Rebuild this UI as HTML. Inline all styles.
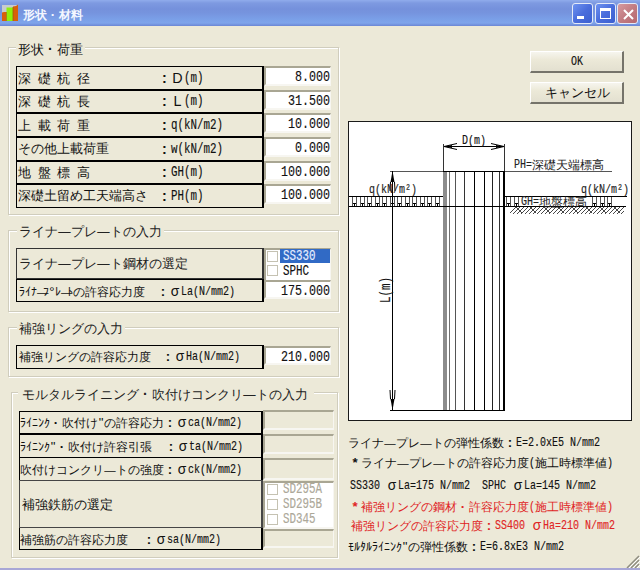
<!DOCTYPE html>
<html><head><meta charset="utf-8"><style>
html,body{margin:0;padding:0;}
body{width:640px;height:570px;overflow:hidden;position:relative;background:#ECE9D8;font-family:"Liberation Sans",sans-serif;font-size:12px;color:#000;}
.a{position:absolute;box-sizing:border-box;}
.t{position:absolute;white-space:nowrap;line-height:20px;height:20px;font-size:0;}
.t span{line-height:20px;vertical-align:baseline;}
.ib{display:inline-block;white-space:nowrap;transform-origin:0 0;}
.f{font-family:"Liberation Sans",sans-serif;-webkit-text-stroke:0.3px currentColor;}
.ns{-webkit-text-stroke:0;}
.h{font-family:"Liberation Mono",monospace;-webkit-text-stroke:0.15px currentColor;}
#title{left:0;top:0;width:640px;height:26px;background:linear-gradient(#90ACEC 0px,#7E9AE1 3px,#7591DC 9px,#7694DE 13px,#7A9FE7 19px,#7EA4EB 23px,#7190DC 25px,#6B86D4 26px);}
.cap{width:21px;height:21px;border:1px solid #E4EAF8;border-radius:3px;}
.lb{border:1px solid #000;border-right-width:2px;}
.inp{border-top:2px solid #A9A693;border-left:2px solid #A9A693;border-bottom:2px solid #F7F6F1;border-right:1px solid #F7F6F1;}
.btn{background:linear-gradient(#F6F5EE,#ECE9D8 40%,#E3E0D0);border-top:1px solid #fff;border-left:1px solid #fff;border-right:2px solid #75736A;border-bottom:2px solid #75736A;}
.cb{width:11px;height:11px;border:1px solid #C5C2B2;background:#fff;}
</style></head><body>
<div class="a" id="title"></div>
<svg class="a" style="left:2px;top:4px" width="17" height="18" viewBox="0 0 17 18"><rect x="0" y="1" width="16" height="16" fill="#C8CBCE"/><polygon points="0,17 0,8.5 2,8 4.5,8 4.5,17" fill="#D8600A"/><polygon points="4.5,17 4.5,3.5 11,3.5 11,17" fill="#8EF00C"/><polygon points="11,17 11,2.5 14,2 16,0.5 16,17" fill="#D8600A"/><line x1="11" y1="3" x2="11" y2="17" stroke="#9A5A10" stroke-width="0.8"/><line x1="4.5" y1="8" x2="4.5" y2="17" stroke="#9A7A10" stroke-width="0.8"/></svg>
<div class="t" style="left:23px;top:5.15px;color:#F4F7FF;font-weight:bold;"><span class="f" style="font-size:16.00px">形状</span><span class="ib f ns" style="width:12.00px;text-align:center;font-size:13.20px;font-weight:bold;">·</span><span class="f" style="font-size:16.00px">材料</span></div>
<div class="a cap" style="left:572px;top:3px;background:linear-gradient(135deg,#6F93F0,#4A6DDC 50%,#3B5FD0)"><div class="a" style="left:4px;top:12px;width:7px;height:3px;background:#fff"></div></div>
<div class="a cap" style="left:595px;top:3px;background:linear-gradient(135deg,#6F93F0,#4A6DDC 50%,#3B5FD0)"><div class="a" style="left:4px;top:4px;width:9px;height:7px;border:1px solid #fff;border-top-width:3px;box-sizing:content-box"></div></div>
<div class="a cap" style="left:617px;top:3px;background:linear-gradient(135deg,#D69A9F,#C27C82 50%,#B5686F)"><svg class="a" style="left:4px;top:4px" width="13" height="13"><path d="M2,2 L11,11 M11,2 L2,11" stroke="#fff" stroke-width="2"/></svg></div>
<div class="a" style="left:0;top:568px;width:640px;height:2px;background:#A8A7D6"></div>
<div class="a" style="left:9px;top:48px;width:331px;height:168px;border:1px solid #fff"></div><div class="a" style="left:8px;top:47px;width:331px;height:168px;border:1px solid #D0CDBD"></div><div class="a" style="left:16px;top:41px;width:69px;height:12px;background:#ECE9D8"></div>
<div class="t" style="left:18px;top:39.05px;color:#111;"><span class="f" style="font-size:17.33px">形状</span><span class="ib f ns" style="width:13.00px;text-align:center;font-size:14.30px;font-weight:bold;">·</span><span class="f" style="font-size:17.33px">荷重</span></div>
<div class="a" style="left:9px;top:231px;width:331px;height:82px;border:1px solid #fff"></div><div class="a" style="left:8px;top:230px;width:331px;height:82px;border:1px solid #D0CDBD"></div><div class="a" style="left:17px;top:224px;width:147px;height:12px;background:#ECE9D8"></div>
<div class="t" style="left:19px;top:221.65px;color:#222;"><span class="f" style="font-size:17.33px">ライナ</span><span class="ib f ns" style="width:13.00px;text-align:center;font-size:12.35px;">—</span><span class="f" style="font-size:17.33px">プレ</span><span class="ib f ns" style="width:13.00px;text-align:center;font-size:12.35px;">—</span><span class="f" style="font-size:17.33px">トの入力</span></div>
<div class="a" style="left:9px;top:328px;width:331px;height:50px;border:1px solid #fff"></div><div class="a" style="left:8px;top:327px;width:331px;height:50px;border:1px solid #D0CDBD"></div><div class="a" style="left:17px;top:321px;width:108px;height:12px;background:#ECE9D8"></div>
<div class="t" style="left:19px;top:318.75px;color:#222;"><span class="f" style="font-size:17.33px">補強リングの入力</span></div>
<div class="a" style="left:12px;top:393px;width:327px;height:166px;border:1px solid #fff"></div><div class="a" style="left:11px;top:392px;width:327px;height:166px;border:1px solid #D0CDBD"></div><div class="a" style="left:18px;top:386px;width:296px;height:12px;background:#ECE9D8"></div>
<div class="t" style="left:22px;top:383.75px;color:#222;"><span class="f" style="font-size:17.33px">モルタルライニング</span><span class="ib f ns" style="width:13.00px;text-align:center;font-size:14.30px;font-weight:bold;">·</span><span class="f" style="font-size:17.33px">吹付けコンクリ</span><span class="ib f ns" style="width:13.00px;text-align:center;font-size:12.35px;">—</span><span class="f" style="font-size:17.33px">トの入力</span></div>
<div class="a lb" style="left:16px;top:66px;width:248px;height:24px;border-color:#000"></div>
<div class="t" style="left:18px;top:67.95px;color:#111;"><span class="f" style="font-size:17.33px">深</span><span class="ib" style="width:6.50px"><span class="h ib" style="font-size:14.04px;transform:scaleX(0.772);vertical-align:1px">&nbsp;</span></span><span class="f" style="font-size:17.33px">礎</span><span class="ib" style="width:6.50px"><span class="h ib" style="font-size:14.04px;transform:scaleX(0.772);vertical-align:1px">&nbsp;</span></span><span class="f" style="font-size:17.33px">杭</span><span class="ib" style="width:6.50px"><span class="h ib" style="font-size:14.04px;transform:scaleX(0.772);vertical-align:1px">&nbsp;</span></span><span class="f" style="font-size:17.33px">径</span></div>
<div class="t" style="left:158px;top:67.95px;color:#111;"><span class="ib f ns" style="width:13.00px;text-align:center;font-size:14.30px;font-weight:bold;">:</span><span class="ib f ns" style="width:13.00px;text-align:center;font-size:14.30px;">D</span><span class="ib" style="width:19.50px"><span class="h ib" style="font-size:14.04px;transform:scaleX(0.772);vertical-align:1px">(m)</span></span></div>
<div class="a inp" style="left:264px;top:66px;width:67px;height:20px;background:#fff"></div><div class="t" style="left:295px;top:67.00px;color:#111;"><span class="ib" style="width:35.00px"><span class="h ib" style="font-size:15.12px;transform:scaleX(0.772);vertical-align:1px">8.000</span></span></div>
<div class="a lb" style="left:16px;top:90px;width:248px;height:23px;border-color:#000"></div>
<div class="t" style="left:18px;top:91.45px;color:#111;"><span class="f" style="font-size:17.33px">深</span><span class="ib" style="width:6.50px"><span class="h ib" style="font-size:14.04px;transform:scaleX(0.772);vertical-align:1px">&nbsp;</span></span><span class="f" style="font-size:17.33px">礎</span><span class="ib" style="width:6.50px"><span class="h ib" style="font-size:14.04px;transform:scaleX(0.772);vertical-align:1px">&nbsp;</span></span><span class="f" style="font-size:17.33px">杭</span><span class="ib" style="width:6.50px"><span class="h ib" style="font-size:14.04px;transform:scaleX(0.772);vertical-align:1px">&nbsp;</span></span><span class="f" style="font-size:17.33px">長</span></div>
<div class="t" style="left:158px;top:91.45px;color:#111;"><span class="ib f ns" style="width:13.00px;text-align:center;font-size:14.30px;font-weight:bold;">:</span><span class="ib f ns" style="width:13.00px;text-align:center;font-size:14.30px;">L</span><span class="ib" style="width:19.50px"><span class="h ib" style="font-size:14.04px;transform:scaleX(0.772);vertical-align:1px">(m)</span></span></div>
<div class="a inp" style="left:264px;top:90px;width:67px;height:20px;background:#fff"></div><div class="t" style="left:288px;top:91.00px;color:#111;"><span class="ib" style="width:42.00px"><span class="h ib" style="font-size:15.12px;transform:scaleX(0.772);vertical-align:1px">31.500</span></span></div>
<div class="a lb" style="left:16px;top:113px;width:248px;height:24px;border-color:#000"></div>
<div class="t" style="left:18px;top:114.95px;color:#111;"><span class="f" style="font-size:17.33px">上</span><span class="ib" style="width:6.50px"><span class="h ib" style="font-size:14.04px;transform:scaleX(0.772);vertical-align:1px">&nbsp;</span></span><span class="f" style="font-size:17.33px">載</span><span class="ib" style="width:6.50px"><span class="h ib" style="font-size:14.04px;transform:scaleX(0.772);vertical-align:1px">&nbsp;</span></span><span class="f" style="font-size:17.33px">荷</span><span class="ib" style="width:6.50px"><span class="h ib" style="font-size:14.04px;transform:scaleX(0.772);vertical-align:1px">&nbsp;</span></span><span class="f" style="font-size:17.33px">重</span></div>
<div class="t" style="left:158px;top:114.95px;color:#111;"><span class="ib f ns" style="width:13.00px;text-align:center;font-size:14.30px;font-weight:bold;">:</span><span class="ib" style="width:52.00px"><span class="h ib" style="font-size:14.04px;transform:scaleX(0.772);vertical-align:1px">q(kN/m2)</span></span></div>
<div class="a inp" style="left:264px;top:113px;width:67px;height:20px;background:#fff"></div><div class="t" style="left:288px;top:114.00px;color:#111;"><span class="ib" style="width:42.00px"><span class="h ib" style="font-size:15.12px;transform:scaleX(0.772);vertical-align:1px">10.000</span></span></div>
<div class="a lb" style="left:16px;top:137px;width:248px;height:24px;border-color:#000"></div>
<div class="t" style="left:18px;top:138.95px;color:#111;"><span class="f" style="font-size:17.33px">その他上載荷重</span></div>
<div class="t" style="left:158px;top:138.95px;color:#111;"><span class="ib f ns" style="width:13.00px;text-align:center;font-size:14.30px;font-weight:bold;">:</span><span class="ib" style="width:52.00px"><span class="h ib" style="font-size:14.04px;transform:scaleX(0.772);vertical-align:1px">w(kN/m2)</span></span></div>
<div class="a inp" style="left:264px;top:137px;width:67px;height:20px;background:#fff"></div><div class="t" style="left:295px;top:138.00px;color:#111;"><span class="ib" style="width:35.00px"><span class="h ib" style="font-size:15.12px;transform:scaleX(0.772);vertical-align:1px">0.000</span></span></div>
<div class="a lb" style="left:16px;top:161px;width:248px;height:23px;border-color:#000"></div>
<div class="t" style="left:18px;top:162.45px;color:#111;"><span class="f" style="font-size:17.33px">地</span><span class="ib" style="width:6.50px"><span class="h ib" style="font-size:14.04px;transform:scaleX(0.772);vertical-align:1px">&nbsp;</span></span><span class="f" style="font-size:17.33px">盤</span><span class="ib" style="width:6.50px"><span class="h ib" style="font-size:14.04px;transform:scaleX(0.772);vertical-align:1px">&nbsp;</span></span><span class="f" style="font-size:17.33px">標</span><span class="ib" style="width:6.50px"><span class="h ib" style="font-size:14.04px;transform:scaleX(0.772);vertical-align:1px">&nbsp;</span></span><span class="f" style="font-size:17.33px">高</span></div>
<div class="t" style="left:158px;top:162.45px;color:#111;"><span class="ib f ns" style="width:13.00px;text-align:center;font-size:14.30px;font-weight:bold;">:</span><span class="ib" style="width:32.50px"><span class="h ib" style="font-size:14.04px;transform:scaleX(0.772);vertical-align:1px">GH(m)</span></span></div>
<div class="a inp" style="left:264px;top:161px;width:67px;height:20px;background:#fff"></div><div class="t" style="left:281px;top:162.00px;color:#111;"><span class="ib" style="width:49.00px"><span class="h ib" style="font-size:15.12px;transform:scaleX(0.772);vertical-align:1px">100.000</span></span></div>
<div class="a lb" style="left:16px;top:184px;width:248px;height:24px;border-color:#000"></div>
<div class="t" style="left:18px;top:185.95px;color:#111;"><span class="f" style="font-size:17.33px">深礎土留め工天端高さ</span></div>
<div class="t" style="left:158px;top:185.95px;color:#111;"><span class="ib f ns" style="width:13.00px;text-align:center;font-size:14.30px;font-weight:bold;">:</span><span class="ib" style="width:32.50px"><span class="h ib" style="font-size:14.04px;transform:scaleX(0.772);vertical-align:1px">PH(m)</span></span></div>
<div class="a inp" style="left:264px;top:184px;width:67px;height:20px;background:#fff"></div><div class="t" style="left:281px;top:185.00px;color:#111;"><span class="ib" style="width:49.00px"><span class="h ib" style="font-size:15.12px;transform:scaleX(0.772);vertical-align:1px">100.000</span></span></div>
<div class="a lb" style="left:16px;top:248px;width:248px;height:31px;border-color:#333"></div>
<div class="a lb" style="left:16px;top:279px;width:248px;height:23px;border-color:#000"></div>
<div class="t" style="left:19px;top:254.15px;color:#222;"><span class="f" style="font-size:17.33px">ライナ</span><span class="ib f ns" style="width:13.00px;text-align:center;font-size:12.35px;">—</span><span class="f" style="font-size:17.33px">プレ</span><span class="ib f ns" style="width:13.00px;text-align:center;font-size:12.35px;">—</span><span class="f" style="font-size:17.33px">ト鋼材の選定</span></div>
<div class="t" style="left:19px;top:281.65px;color:#111;"><span class="ib" style="width:18.00px"><span class="f ib hkin" style="font-size:16.00px;transform:scaleX(0.5)">ﾗｲﾅ</span></span><span class="ib f ns" style="width:6.00px;text-align:center;font-size:11.40px;">—</span><span class="ib" style="width:6.00px"><span class="f ib hkin" style="font-size:16.00px;transform:scaleX(0.5)">ﾌ</span></span><span class="ib f ns" style="width:6.00px;text-align:center;font-size:13.20px;">°</span><span class="ib" style="width:6.00px"><span class="f ib hkin" style="font-size:16.00px;transform:scaleX(0.5)">ﾚ</span></span><span class="ib f ns" style="width:6.00px;text-align:center;font-size:11.40px;">—</span><span class="ib" style="width:6.00px"><span class="f ib hkin" style="font-size:16.00px;transform:scaleX(0.5)">ﾄ</span></span><span class="f" style="font-size:16.00px">の許容応力度</span></div>
<div class="t" style="left:157px;top:281.65px;color:#111;"><span class="ib f ns" style="width:12.00px;text-align:center;font-size:13.20px;font-weight:bold;">:</span><span class="ib f ns" style="width:12.00px;text-align:center;font-size:13.80px;">σ</span><span class="ib" style="width:54.00px"><span class="h ib" style="font-size:12.96px;transform:scaleX(0.772);vertical-align:1px">La(N/mm2)</span></span></div>
<div class="a inp" style="left:264px;top:248px;width:67px;height:32px;background:#fff;border-bottom:none"></div>
<div class="a cb" style="left:267px;top:251px"></div>
<div class="a cb" style="left:267px;top:265px"></div>
<div class="a" style="left:280px;top:249px;width:50px;height:14px;background:#316AC5"></div>
<div class="t" style="left:282.5px;top:246.45px;color:#E6EEFF;"><span class="ib" style="width:32.50px"><span class="h ib" style="font-size:14.04px;transform:scaleX(0.772);vertical-align:1px">SS330</span></span></div>
<div class="t" style="left:282.5px;top:260.95px;color:#111;"><span class="ib" style="width:26.00px"><span class="h ib" style="font-size:14.04px;transform:scaleX(0.772);vertical-align:1px">SPHC</span></span></div>
<div class="a inp" style="left:264px;top:280px;width:67px;height:19px;background:#fff"></div><div class="t" style="left:281px;top:280.50px;color:#111;"><span class="ib" style="width:49.00px"><span class="h ib" style="font-size:15.12px;transform:scaleX(0.772);vertical-align:1px">175.000</span></span></div>
<div class="a lb" style="left:16px;top:345px;width:248px;height:24px;border-color:#000"></div>
<div class="t" style="left:19px;top:347.15px;color:#111;"><span class="f" style="font-size:16.00px">補強リングの許容応力度</span></div>
<div class="t" style="left:162px;top:347.15px;color:#111;"><span class="ib f ns" style="width:12.00px;text-align:center;font-size:13.20px;font-weight:bold;">:</span><span class="ib f ns" style="width:12.00px;text-align:center;font-size:13.80px;">σ</span><span class="ib" style="width:54.00px"><span class="h ib" style="font-size:12.96px;transform:scaleX(0.772);vertical-align:1px">Ha(N/mm2)</span></span></div>
<div class="a inp" style="left:264px;top:346px;width:67px;height:19px;background:#fff"></div><div class="t" style="left:281px;top:346.50px;color:#111;"><span class="ib" style="width:49.00px"><span class="h ib" style="font-size:15.12px;transform:scaleX(0.772);vertical-align:1px">210.000</span></span></div>
<div class="a lb" style="left:19px;top:411px;width:244px;height:23px;border-color:#000"></div>
<div class="a lb" style="left:19px;top:434px;width:244px;height:24px;border-color:#000"></div>
<div class="a lb" style="left:19px;top:457px;width:244px;height:24px;border-color:#000"></div>
<div class="a lb" style="left:19px;top:527px;width:244px;height:23px;border-color:#000"></div>
<div class="a" style="left:19px;top:480px;width:244px;height:48px;border:1px solid #454545;border-right-width:2px"></div>
<div class="t" style="left:20px;top:413.15px;color:#111;"><span class="ib" style="width:30.00px"><span class="f ib hkin" style="font-size:16.00px;transform:scaleX(0.5)">ﾗｲﾆﾝｸ</span></span><span class="ib f ns" style="width:12.00px;text-align:center;font-size:13.20px;font-weight:bold;">·</span><span class="f" style="font-size:16.00px">吹付け</span><span class="ib f ns" style="width:6.00px;text-align:center;font-size:13.20px;">&quot;</span><span class="f" style="font-size:16.00px">の許容応力</span><span class="ib f ns" style="width:12.00px;text-align:center;font-size:13.20px;font-weight:bold;">:</span><span class="ib f ns" style="width:12.00px;text-align:center;font-size:13.80px;">σ</span><span class="ib" style="width:54.00px"><span class="h ib" style="font-size:12.96px;transform:scaleX(0.772);vertical-align:1px">ca(N/mm2)</span></span></div>
<div class="t" style="left:20px;top:436.95px;color:#111;"><span class="ib" style="width:30.00px"><span class="f ib hkin" style="font-size:16.00px;transform:scaleX(0.5)">ﾗｲﾆﾝｸ</span></span><span class="ib f ns" style="width:6.00px;text-align:center;font-size:13.20px;">&quot;</span><span class="ib f ns" style="width:12.00px;text-align:center;font-size:13.20px;font-weight:bold;">·</span><span class="f" style="font-size:16.00px">吹付け許容引張</span></div>
<div class="t" style="left:165px;top:436.95px;color:#111;"><span class="ib f ns" style="width:12.00px;text-align:center;font-size:13.20px;font-weight:bold;">:</span><span class="ib f ns" style="width:12.00px;text-align:center;font-size:13.80px;">σ</span><span class="ib" style="width:54.00px"><span class="h ib" style="font-size:12.96px;transform:scaleX(0.772);vertical-align:1px">ta(N/mm2)</span></span></div>
<div class="t" style="left:20px;top:460.35px;color:#111;"><span class="f" style="font-size:16.00px">吹付けコンクリ</span><span class="ib f ns" style="width:12.00px;text-align:center;font-size:11.40px;">—</span><span class="f" style="font-size:16.00px">トの強度</span><span class="ib f ns" style="width:12.00px;text-align:center;font-size:13.20px;font-weight:bold;">:</span><span class="ib f ns" style="width:12.00px;text-align:center;font-size:13.80px;">σ</span><span class="ib" style="width:54.00px"><span class="h ib" style="font-size:12.96px;transform:scaleX(0.772);vertical-align:1px">ck(N/mm2)</span></span></div>
<div class="t" style="left:22px;top:494.95px;color:#111;"><span class="f" style="font-size:17.33px">補強鉄筋の選定</span></div>
<div class="t" style="left:20px;top:529.95px;color:#111;"><span class="f" style="font-size:16.00px">補強筋の許容応力度</span></div>
<div class="t" style="left:143px;top:529.95px;color:#111;"><span class="ib f ns" style="width:12.00px;text-align:center;font-size:13.20px;font-weight:bold;">:</span><span class="ib f ns" style="width:12.00px;text-align:center;font-size:13.80px;">σ</span><span class="ib" style="width:54.00px"><span class="h ib" style="font-size:12.96px;transform:scaleX(0.772);vertical-align:1px">sa(N/mm2)</span></span></div>
<div class="a inp" style="left:263px;top:410px;width:71px;height:20px;background:#ECE9D8"></div>
<div class="a inp" style="left:263px;top:434px;width:71px;height:20px;background:#ECE9D8"></div>
<div class="a inp" style="left:263px;top:458px;width:71px;height:22px;background:#ECE9D8"></div>
<div class="a inp" style="left:263px;top:481px;width:71px;height:48px;background:#fff"></div>
<div class="a cb" style="left:267px;top:484px;border-color:#C5C2B2"></div>
<div class="t" style="left:283px;top:479.45px;color:#ACA899;"><span class="ib" style="width:39.00px"><span class="h ib" style="font-size:14.04px;transform:scaleX(0.772);vertical-align:1px">SD295A</span></span></div>
<div class="a cb" style="left:267px;top:499px;border-color:#C5C2B2"></div>
<div class="t" style="left:283px;top:494.45px;color:#ACA899;"><span class="ib" style="width:39.00px"><span class="h ib" style="font-size:14.04px;transform:scaleX(0.772);vertical-align:1px">SD295B</span></span></div>
<div class="a cb" style="left:267px;top:514px;border-color:#C5C2B2"></div>
<div class="t" style="left:283px;top:509.45px;color:#ACA899;"><span class="ib" style="width:32.50px"><span class="h ib" style="font-size:14.04px;transform:scaleX(0.772);vertical-align:1px">SD345</span></span></div>
<div class="a inp" style="left:263px;top:529px;width:71px;height:19px;background:#ECE9D8"></div>
<div class="a btn" style="left:530px;top:51px;width:94px;height:22px"></div>
<div class="t" style="left:571px;top:52.35px;color:#111;"><span class="ib" style="width:12.00px"><span class="h ib" style="font-size:12.96px;transform:scaleX(0.772);vertical-align:1px">OK</span></span></div>
<div class="a btn" style="left:530px;top:82px;width:94px;height:22px"></div>
<div class="t" style="left:545px;top:83.15px;color:#111;"><span class="f" style="font-size:17.33px">キャンセル</span></div>
<div class="a" style="left:348px;top:121px;width:284px;height:300px;background:#fff;border:1px solid #1a1a1a"></div>
<svg class="a" style="left:0;top:0" width="640" height="570" viewBox="0 0 640 570" shape-rendering="crispEdges"><line x1="390" y1="171.5" x2="612" y2="171.5" stroke="#555" stroke-width="1"/><line x1="443.5" y1="144" x2="443.5" y2="171" stroke="#333"/><line x1="504.5" y1="144" x2="504.5" y2="171" stroke="#333"/><line x1="444" y1="146.5" x2="504" y2="146.5" stroke="#000"/></svg><svg class="a" style="left:0;top:0" width="640" height="570" viewBox="0 0 640 570"><path d="M444,146.5 L457,143.5 M444,146.5 L457,149.5 M504,146.5 L491,143.5 M504,146.5 L491,149.5" stroke="#000" stroke-width="1" fill="none"/><path d="M444,146.5 L452,145 L452,148 Z M504,146.5 L496,145 L496,148 Z" fill="#000"/></svg><svg class="a" style="left:0;top:0" width="640" height="570" viewBox="0 0 640 570" shape-rendering="crispEdges"><rect x="443" y="171" width="4" height="240" fill="#8C8C8C"/><line x1="449" y1="171" x2="449" y2="411" stroke="#707070" stroke-width="1"/><line x1="455.5" y1="171" x2="455.5" y2="411" stroke="#555" stroke-width="1"/><line x1="464.5" y1="171" x2="464.5" y2="411" stroke="#333" stroke-width="1"/><line x1="474.5" y1="171" x2="474.5" y2="411" stroke="#000" stroke-width="1"/><line x1="484.5" y1="171" x2="484.5" y2="411" stroke="#000" stroke-width="1"/><line x1="492.5" y1="171" x2="492.5" y2="411" stroke="#222" stroke-width="1"/><line x1="499.5" y1="171" x2="499.5" y2="411" stroke="#333" stroke-width="1"/><line x1="504" y1="171" x2="504" y2="411" stroke="#000" stroke-width="2"/><line x1="443" y1="171.5" x2="505" y2="171.5" stroke="#000"/><line x1="390" y1="410.5" x2="505" y2="410.5" stroke="#000"/><line x1="392.5" y1="171" x2="392.5" y2="410" stroke="#000"/><line x1="349" y1="196.5" x2="443" y2="196.5" stroke="#000"/><line x1="505" y1="196.5" x2="627" y2="196.5" stroke="#000"/><line x1="349" y1="206.5" x2="626" y2="206.5" stroke="#000"/><line x1="352.5" y1="197" x2="352.5" y2="206" stroke="#555"/><line x1="356.5" y1="197" x2="356.5" y2="206" stroke="#555"/><rect x="353" y="203" width="3" height="1" fill="#000"/><rect x="354" y="204" width="1" height="2" fill="#000"/><line x1="360.0" y1="197" x2="360.0" y2="206" stroke="#555"/><line x1="364.0" y1="197" x2="364.0" y2="206" stroke="#555"/><rect x="360.5" y="203" width="3" height="1" fill="#000"/><rect x="361.5" y="204" width="1" height="2" fill="#000"/><line x1="367.5" y1="197" x2="367.5" y2="206" stroke="#555"/><line x1="371.5" y1="197" x2="371.5" y2="206" stroke="#555"/><rect x="368.0" y="203" width="3" height="1" fill="#000"/><rect x="369.0" y="204" width="1" height="2" fill="#000"/><line x1="375.0" y1="197" x2="375.0" y2="206" stroke="#555"/><line x1="379.0" y1="197" x2="379.0" y2="206" stroke="#555"/><rect x="375.5" y="203" width="3" height="1" fill="#000"/><rect x="376.5" y="204" width="1" height="2" fill="#000"/><line x1="382.5" y1="197" x2="382.5" y2="206" stroke="#555"/><line x1="386.5" y1="197" x2="386.5" y2="206" stroke="#555"/><rect x="383.0" y="203" width="3" height="1" fill="#000"/><rect x="384.0" y="204" width="1" height="2" fill="#000"/><line x1="390.0" y1="197" x2="390.0" y2="206" stroke="#555"/><line x1="394.0" y1="197" x2="394.0" y2="206" stroke="#555"/><rect x="390.5" y="203" width="3" height="1" fill="#000"/><rect x="391.5" y="204" width="1" height="2" fill="#000"/><line x1="397.5" y1="197" x2="397.5" y2="206" stroke="#555"/><line x1="401.5" y1="197" x2="401.5" y2="206" stroke="#555"/><rect x="398.0" y="203" width="3" height="1" fill="#000"/><rect x="399.0" y="204" width="1" height="2" fill="#000"/><line x1="405.0" y1="197" x2="405.0" y2="206" stroke="#555"/><line x1="409.0" y1="197" x2="409.0" y2="206" stroke="#555"/><rect x="405.5" y="203" width="3" height="1" fill="#000"/><rect x="406.5" y="204" width="1" height="2" fill="#000"/><line x1="412.5" y1="197" x2="412.5" y2="206" stroke="#555"/><line x1="416.5" y1="197" x2="416.5" y2="206" stroke="#555"/><rect x="413.0" y="203" width="3" height="1" fill="#000"/><rect x="414.0" y="204" width="1" height="2" fill="#000"/><line x1="420.0" y1="197" x2="420.0" y2="206" stroke="#555"/><line x1="424.0" y1="197" x2="424.0" y2="206" stroke="#555"/><rect x="420.5" y="203" width="3" height="1" fill="#000"/><rect x="421.5" y="204" width="1" height="2" fill="#000"/><line x1="427.5" y1="197" x2="427.5" y2="206" stroke="#555"/><line x1="431.5" y1="197" x2="431.5" y2="206" stroke="#555"/><rect x="428.0" y="203" width="3" height="1" fill="#000"/><rect x="429.0" y="204" width="1" height="2" fill="#000"/><line x1="435.0" y1="197" x2="435.0" y2="206" stroke="#555"/><line x1="439.0" y1="197" x2="439.0" y2="206" stroke="#555"/><rect x="435.5" y="203" width="3" height="1" fill="#000"/><rect x="436.5" y="204" width="1" height="2" fill="#000"/><line x1="506.5" y1="197" x2="506.5" y2="206" stroke="#555"/><line x1="510.5" y1="197" x2="510.5" y2="206" stroke="#555"/><rect x="507" y="203" width="3" height="1" fill="#000"/><rect x="508" y="204" width="1" height="2" fill="#000"/><line x1="514.0" y1="197" x2="514.0" y2="206" stroke="#555"/><line x1="518.0" y1="197" x2="518.0" y2="206" stroke="#555"/><rect x="514.5" y="203" width="3" height="1" fill="#000"/><rect x="515.5" y="204" width="1" height="2" fill="#000"/><line x1="592.5" y1="197" x2="592.5" y2="206" stroke="#555"/><line x1="596.5" y1="197" x2="596.5" y2="206" stroke="#555"/><rect x="593" y="203" width="3" height="1" fill="#000"/><rect x="594" y="204" width="1" height="2" fill="#000"/><line x1="600.0" y1="197" x2="600.0" y2="206" stroke="#555"/><line x1="604.0" y1="197" x2="604.0" y2="206" stroke="#555"/><rect x="600.5" y="203" width="3" height="1" fill="#000"/><rect x="601.5" y="204" width="1" height="2" fill="#000"/><line x1="607.5" y1="197" x2="607.5" y2="206" stroke="#555"/><line x1="611.5" y1="197" x2="611.5" y2="206" stroke="#555"/><rect x="608.0" y="203" width="3" height="1" fill="#000"/><rect x="609.0" y="204" width="1" height="2" fill="#000"/></svg><svg class="a" style="left:0;top:0" width="640" height="570" viewBox="0 0 640 570"><defs><clipPath id="hc"><rect x="510" y="207" width="114" height="7"/></clipPath></defs><path clip-path="url(#hc)" d="M509,214 L516,207 M513,214 L520,207 M517,214 L524,207 M521,214 L528,207 M525,214 L532,207 M529,214 L536,207 M533,214 L540,207 M537,214 L544,207 M541,214 L548,207 M545,214 L552,207 M549,214 L556,207 M553,214 L560,207 M557,214 L564,207 M561,214 L568,207 M565,214 L572,207 M569,214 L576,207 M573,214 L580,207 M577,214 L584,207 M581,214 L588,207 M585,214 L592,207 M589,214 L596,207 M593,214 L600,207 M597,214 L604,207 M601,214 L608,207 M605,214 L612,207 M609,214 L616,207 M613,214 L620,207 M617,214 L624,207 M621,214 L628,207 M625,214 L632,207 M629,214 L636,207 M516,207 L522,213 M530,207 L536,213 M544,207 L550,213 M558,207 L564,213 M572,207 L578,213 M586,207 L592,213 M600,207 L606,213 M614,207 L620,213 M628,207 L634,213" stroke="#333" stroke-width="0.9" fill="none"/><path d="M392.5,171 L390.5,182 L394.5,182 Z" fill="#000"/><path d="M392.5,410 L390.5,399 L394.5,399 Z" fill="#000"/><path d="M390.5,182 L390,191 M394.5,182 L395,191 M390.5,399 L390,390 M394.5,399 L395,390" stroke="#000" stroke-width="1" fill="none"/></svg>
<div class="t" style="left:462px;top:130.65px;color:#111;"><span class="ib" style="width:24.00px"><span class="h ib" style="font-size:12.96px;transform:scaleX(0.772);vertical-align:1px">D(m)</span></span></div>
<div class="t" style="left:514px;top:154.65px;color:#222;"><span class="ib" style="width:18.00px"><span class="h ib" style="font-size:12.96px;transform:scaleX(0.772);vertical-align:1px">PH=</span></span><span class="f" style="font-size:16.00px">深礎天端標高</span></div>
<div class="t" style="left:369px;top:179.65px;color:#222;"><span class="ib" style="width:48.00px"><span class="h ib" style="font-size:12.96px;transform:scaleX(0.772);vertical-align:1px">q(kN/m²)</span></span></div>
<div class="t" style="left:581px;top:180.15px;color:#222;"><span class="ib" style="width:48.00px"><span class="h ib" style="font-size:12.96px;transform:scaleX(0.772);vertical-align:1px">q(kN/m²)</span></span></div>
<div class="a" style="left:521px;top:197px;width:70px;height:9px;background:#fff"></div>
<div class="t" style="left:521px;top:191.65px;color:#222;"><span class="ib" style="width:18.00px"><span class="h ib" style="font-size:12.96px;transform:scaleX(0.772);vertical-align:1px">GH=</span></span><span class="f" style="font-size:16.00px">地盤標高</span></div>
<div class="a" style="left:372.5px;top:283px;width:26px;height:14px;transform:rotate(-90deg);transform-origin:50% 50%"><div class="t" style="left:0px;top:-2.55px;color:#111;"><span class="ib" style="width:26.00px"><span class="h ib" style="font-size:14.04px;transform:scaleX(0.772);vertical-align:1px">L(m)</span></span></div></div>
<div class="t" style="left:348px;top:432.65px;color:#111;"><span class="f" style="font-size:16.00px">ライナ</span><span class="ib f ns" style="width:12.00px;text-align:center;font-size:11.40px;">—</span><span class="f" style="font-size:16.00px">プレ</span><span class="ib f ns" style="width:12.00px;text-align:center;font-size:11.40px;">—</span><span class="f" style="font-size:16.00px">トの弾性係数</span><span class="ib f ns" style="width:12.00px;text-align:center;font-size:13.20px;font-weight:bold;">:</span><span class="ib" style="width:84.00px"><span class="h ib" style="font-size:12.96px;transform:scaleX(0.772);vertical-align:1px">E=2.0xE5&nbsp;N/mm2</span></span></div>
<div class="t" style="left:349px;top:452.65px;color:#111;"><span class="ib f ns" style="width:12.00px;text-align:center;font-size:13.20px;font-weight:bold;">*</span><span class="f" style="font-size:16.00px">ライナ</span><span class="ib f ns" style="width:12.00px;text-align:center;font-size:11.40px;">—</span><span class="f" style="font-size:16.00px">プレ</span><span class="ib f ns" style="width:12.00px;text-align:center;font-size:11.40px;">—</span><span class="f" style="font-size:16.00px">トの許容応力度</span><span class="ib" style="width:6.00px"><span class="h ib" style="font-size:12.96px;transform:scaleX(0.772);vertical-align:1px">(</span></span><span class="f" style="font-size:16.00px">施工時標準値</span><span class="ib" style="width:6.00px"><span class="h ib" style="font-size:12.96px;transform:scaleX(0.772);vertical-align:1px">)</span></span></div>
<div class="t" style="left:350px;top:475.85px;color:#111;"><span class="ib" style="width:36.00px"><span class="h ib" style="font-size:12.96px;transform:scaleX(0.772);vertical-align:1px">SS330&nbsp;</span></span><span class="ib f ns" style="width:12.00px;text-align:center;font-size:13.80px;">σ</span><span class="ib" style="width:114.00px"><span class="h ib" style="font-size:12.96px;transform:scaleX(0.772);vertical-align:1px">La=175&nbsp;N/mm2&nbsp;&nbsp;SPHC&nbsp;</span></span><span class="ib f ns" style="width:12.00px;text-align:center;font-size:13.80px;">σ</span><span class="ib" style="width:72.00px"><span class="h ib" style="font-size:12.96px;transform:scaleX(0.772);vertical-align:1px">La=145&nbsp;N/mm2</span></span></div>
<div class="t" style="left:349px;top:496.65px;color:#E02424;"><span class="ib f ns" style="width:12.00px;text-align:center;font-size:13.20px;font-weight:bold;">*</span><span class="f" style="font-size:16.00px">補強リングの鋼材</span><span class="ib f ns" style="width:12.00px;text-align:center;font-size:13.20px;font-weight:bold;">·</span><span class="f" style="font-size:16.00px">許容応力度</span><span class="ib" style="width:6.00px"><span class="h ib" style="font-size:12.96px;transform:scaleX(0.772);vertical-align:1px">(</span></span><span class="f" style="font-size:16.00px">施工時標準値</span><span class="ib" style="width:6.00px"><span class="h ib" style="font-size:12.96px;transform:scaleX(0.772);vertical-align:1px">)</span></span></div>
<div class="t" style="left:351px;top:516.45px;color:#E02424;"><span class="f" style="font-size:16.00px">補強リングの許容応力度</span><span class="ib f ns" style="width:12.00px;text-align:center;font-size:13.20px;font-weight:bold;">:</span><span class="ib" style="width:36.00px"><span class="h ib" style="font-size:12.96px;transform:scaleX(0.772);vertical-align:1px">SS400&nbsp;</span></span><span class="ib f ns" style="width:12.00px;text-align:center;font-size:13.80px;">σ</span><span class="ib" style="width:72.00px"><span class="h ib" style="font-size:12.96px;transform:scaleX(0.772);vertical-align:1px">Ha=210&nbsp;N/mm2</span></span></div>
<div class="t" style="left:348px;top:537.15px;color:#111;"><span class="ib" style="width:54.00px"><span class="f ib hkin" style="font-size:16.00px;transform:scaleX(0.5)">ﾓﾙﾀﾙﾗｲﾆﾝｸ</span></span><span class="ib f ns" style="width:6.00px;text-align:center;font-size:13.20px;">&quot;</span><span class="f" style="font-size:16.00px">の弾性係数</span><span class="ib f ns" style="width:12.00px;text-align:center;font-size:13.20px;font-weight:bold;">:</span><span class="ib" style="width:84.00px"><span class="h ib" style="font-size:12.96px;transform:scaleX(0.772);vertical-align:1px">E=6.8xE3&nbsp;N/mm2</span></span></div>
<svg class="a" style="left:626px;top:555px" width="14" height="13"><path d="M13,1 L1,13 M13,5 L5,13 M13,9 L9,13" stroke="#8F8D80" stroke-width="1.5" fill="none"/><path d="M14,2 L2,14 M14,6 L6,14 M14,10 L10,14" stroke="#fff" stroke-width="1" fill="none"/></svg>
<script>
(function(){
  var p=document.createElement('span');
  p.style.cssText='position:absolute;left:0;top:0;font-size:16px;font-family:"Liberation Sans",sans-serif;white-space:nowrap;visibility:hidden';
  p.textContent='形形形形';
  document.body.appendChild(p);
  var w=p.getBoundingClientRect().width;
  document.body.removeChild(p);
  if(w>56){
    var els=document.querySelectorAll('.f:not(.ns)');
    for(var i=0;i<els.length;i++){
      var e=els[i];
      e.style.fontSize=(parseFloat(e.style.fontSize)*0.75)+'px';
      e.style.webkitTextStroke='0';
      if(e.classList.contains('hkin')){e.style.transform='none';}
    }
  }
})();
</script>
</body></html>
